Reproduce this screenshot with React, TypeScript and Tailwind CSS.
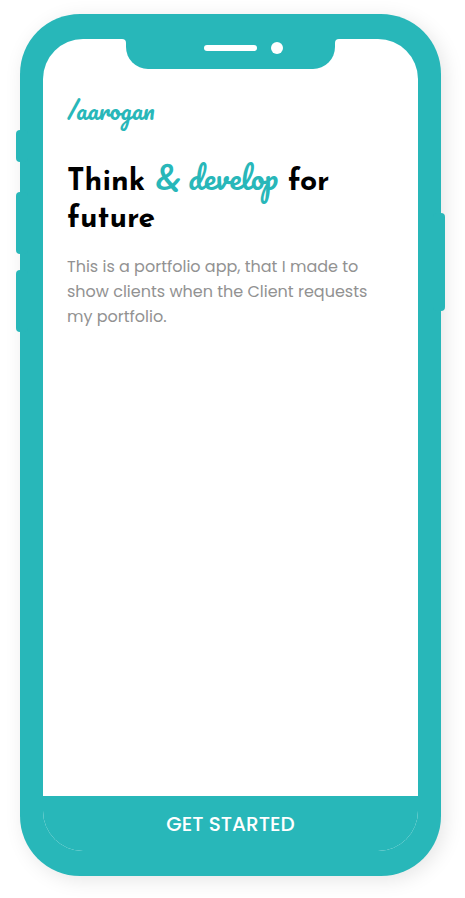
function SideButton({ className }: { className: string }) {
  return <span aria-hidden="true" className={`absolute w-3 rounded-[4px] bg-[#28b7b9] ${className}`} />;
}

function Notch() {
  return (
    <div aria-hidden="true" className="flex justify-center">
      <div className="size-1 bg-[#28b7b9]">
        <div className="size-full rounded-tr bg-white" />
      </div>
      <div className="flex h-[30px] w-[209px] items-start justify-center gap-[14px] rounded-b-[22px] bg-[#28b7b9] pt-[3px]">
        <span className="size-3" />
        <span className="my-[3px] h-[6px] w-[53px] rounded-full bg-white" />
        <span className="size-3 rounded-full bg-white" />
      </div>
      <div className="size-1 bg-[#28b7b9]">
        <div className="size-full rounded-tl bg-white" />
      </div>
    </div>
  );
}

export default function App() {
  return (
    <div className="flex min-h-screen bg-white pt-[14px] pr-6 pb-[22px] pl-5 font-['Poppins','Inter',sans-serif]">
      <div className="relative flex w-full max-w-[421px] flex-col rounded-[60px] bg-[#28b7b9] px-[23px] py-[25px] shadow-[4px_4px_20px_rgba(0,0,0,0.1)]">
        <SideButton className="top-[116px] -left-1 h-8" />
        <SideButton className="top-[178px] -left-1 h-[62px]" />
        <SideButton className="top-[256px] -left-1 h-[62px]" />
        <SideButton className="top-[199px] -right-1 h-[98px]" />

        <div className="flex grow flex-col overflow-hidden rounded-[40px] bg-white">
          <Notch />
          <main className="grow px-6 pt-6">
            <p className="font-['Pacifico','Lato',cursive] text-2xl leading-[34px] text-[#28b7b9]">
              /aarogan
            </p>
            <h1 className="mt-8 font-['Josefin_Sans','Lato',sans-serif] text-[30px] leading-[37px] font-bold text-black">
              Think{' '}
              <span className="font-['Pacifico','Lato',cursive] font-normal text-[#28b7b9]">&amp; develop</span>{' '}
              for future
            </h1>
            <p className="mt-4 text-base leading-[25px] text-[#929292]">
              This is a portfolio app, that I made to show clients when the Client requests my portfolio.
            </p>
          </main>
          <button type="button" className="h-[55px] w-full cursor-pointer bg-[#28b7b9] text-xl font-medium text-white">
            GET STARTED
          </button>
        </div>
      </div>
    </div>
  );
}
